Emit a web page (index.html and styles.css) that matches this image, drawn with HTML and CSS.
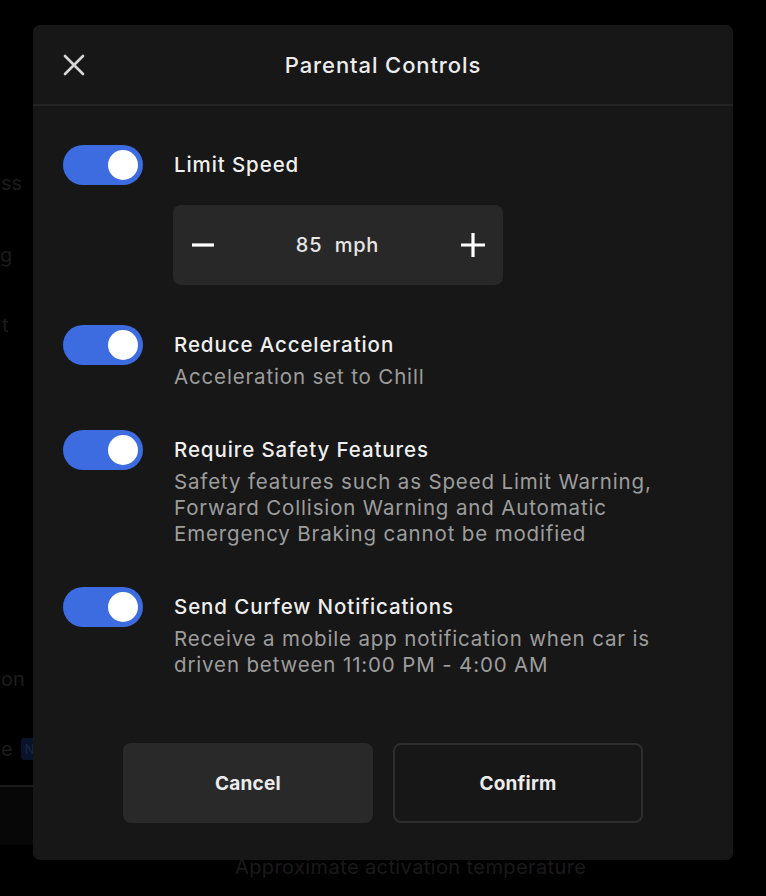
FILE: index.html
```html
<!DOCTYPE html>
<html lang="en">
<head>
  <meta charset="UTF-8" />
  <meta name="viewport" content="width=device-width, initial-scale=1.0"/>
  <title>Parental Controls</title>
  <link rel="stylesheet" href="styles.css">
</head>
<body>

  <!-- settings page behind the dialog, only its edges show -->
  <div class="page">
    <div class="side-menu">
      <div class="side-item item-1">ss</div>
      <div class="side-item item-2">g</div>
      <div class="side-item item-3">t</div>
      <div class="side-item item-4">on</div>
      <div class="side-item item-5">e<span class="badge">N</span></div>
      <div class="side-footer"></div>
    </div>
    <div class="page-note">Approximate activation temperature</div>
  </div>

  <div class="modal">
    <div class="modal-header">
      <button class="close-btn" aria-label="Close">
        <svg width="22" height="22" viewBox="0 0 22 22">
          <path d="M2 2 L20 20 M20 2 L2 20" stroke="#d6d6d6" stroke-width="2.6" stroke-linecap="round" fill="none"/>
        </svg>
      </button>
      <h1>Parental Controls</h1>
    </div>

    <div class="modal-body">
      <div class="option">
        <div class="toggle on"><span class="knob"></span></div>
        <div class="option-text">
          <div class="option-title">Limit Speed</div>
          <div class="stepper">
            <button class="step-btn" aria-label="Decrease">
              <svg width="24" height="24" viewBox="0 0 24 24"><path d="M1 12 H23" stroke="#fff" stroke-width="3.2" fill="none"/></svg>
            </button>
            <div class="step-value">85&nbsp; mph</div>
            <button class="step-btn" aria-label="Increase">
              <svg width="26" height="26" viewBox="0 0 26 26"><path d="M1 13 H25 M13 1 V25" stroke="#fff" stroke-width="3.2" fill="none"/></svg>
            </button>
          </div>
        </div>
      </div>

      <div class="option">
        <div class="toggle on"><span class="knob"></span></div>
        <div class="option-text">
          <div class="option-title">Reduce Acceleration</div>
          <div class="option-desc">Acceleration set to Chill</div>
        </div>
      </div>

      <div class="option">
        <div class="toggle on"><span class="knob"></span></div>
        <div class="option-text">
          <div class="option-title">Require Safety Features</div>
          <div class="option-desc">Safety features such as Speed Limit Warning,<br>Forward Collision Warning and Automatic<br>Emergency Braking cannot be modified</div>
        </div>
      </div>

      <div class="option">
        <div class="toggle on"><span class="knob"></span></div>
        <div class="option-text">
          <div class="option-title">Send Curfew Notifications</div>
          <div class="option-desc">Receive a mobile app notification when car is<br>driven between 11:00 PM - 4:00 AM</div>
        </div>
      </div>
    </div>

    <div class="modal-actions">
      <button class="btn btn-cancel">Cancel</button>
      <button class="btn btn-confirm">Confirm</button>
    </div>
  </div>

</body>
</html>
```

FILE: styles.css
```css
* {
  box-sizing: border-box;
}
body {
  margin: 0;
  width: 766px;
  height: 896px;
  overflow: hidden;
  background: #000;
  font-family: Inter, "Noto Sans", Arial, sans-serif;
  color: #ececec;
}
button {
  font-family: inherit;
  cursor: pointer;
}

/* background page */
.page {
  position: relative;
  height: 896px;
}
.side-menu {
  width: 33px;
  padding-top: 166px;
  display: flex;
  flex-direction: column;
  color: #1c1c1c;
  font-size: 20px;
}
.side-item {
  display: flex;
  white-space: nowrap;
  height: 34px;
  line-height: 34px;
  padding-left: 1px;
}
.item-2 {
  margin-top: 38px;
  padding-left: 0;
}
.item-3 {
  margin-top: 36px;
  padding-left: 2px;
}
.item-4 {
  margin-top: 320px;
}
.item-5 {
  margin-top: 36px;
  gap: 8px;
}
.badge {
  background: #09142c;
  color: #1a2746;
  font-size: 13px;
  padding: 0 4px;
  height: 22px;
  line-height: 22px;
  margin-top: 6px;
  border-radius: 3px;
}
.side-footer {
  margin-top: 19px;
  height: 60px;
  border-top: 2px solid #1a1a1a;
  background: #070707;
}
.page-note {
  position: absolute;
  left: 235px;
  top: 855px;
  font-size: 20px;
  color: #1a1a1a;
  letter-spacing: 0.4px;
}

/* dialog */
.modal {
  position: absolute;
  left: 33px;
  top: 25px;
  width: 700px;
  height: 835px;
  background: #171717;
  border-radius: 7px;
  display: flex;
  flex-direction: column;
}
.modal-header {
  height: 81px;
  border-bottom: 2px solid #242424;
  display: flex;
  align-items: center;
  justify-content: center;
  position: relative;
}
.modal-header h1 {
  margin: 0;
  font-size: 22px;
  font-weight: 500;
  color: #ececec;
  letter-spacing: 0.9px;
}
.close-btn {
  position: absolute;
  left: 30px;
  top: 29px;
  width: 22px;
  height: 22px;
  padding: 0;
  border: none;
  background: none;
  display: flex;
}

.modal-body {
  padding: 39px 0 0 30px;
  display: flex;
  flex-direction: column;
  gap: 40px;
}
.option {
  display: flex;
  gap: 31px;
  align-items: flex-start;
}
.toggle {
  width: 80px;
  height: 40px;
  border-radius: 20px;
  background: #3d6be0;
  display: flex;
  align-items: center;
  justify-content: flex-end;
  padding-right: 5px;
  flex-shrink: 0;
}
.knob {
  width: 30px;
  height: 30px;
  border-radius: 50%;
  background: #fff;
}
.option-text {
  padding-top: 7px;
}
.option-title {
  font-size: 20.5px;
  font-weight: 500;
  line-height: 26px;
  color: #efefef;
  letter-spacing: 0.9px;
}
.option-desc {
  margin-top: 6px;
  font-size: 20.5px;
  line-height: 26px;
  color: #9d9d9d;
  letter-spacing: 0.85px;
}

.stepper {
  margin-top: 27px;
  width: 330px;
  height: 80px;
  margin-left: -1px;
  background: #282828;
  border-radius: 8px;
  display: flex;
  align-items: center;
  justify-content: space-between;
  padding: 0 17px 0 18px;
}
.step-btn {
  border: none;
  background: none;
  padding: 0;
  display: flex;
}
.step-value {
  font-size: 20px;
  font-weight: 500;
  color: #e6e6e6;
  letter-spacing: 0.8px;
}

.modal-actions {
  margin-top: 65px;
  display: flex;
  justify-content: center;
  gap: 20px;
}
.btn {
  width: 250px;
  height: 80px;
  border-radius: 8px;
  font-size: 19px;
  font-weight: 700;
  color: #ececec;
  letter-spacing: 0.2px;
}
.btn-cancel {
  background: #292929;
  border: none;
}
.btn-confirm {
  background: #171717;
  border: 2px solid #2e2e2e;
}
```
